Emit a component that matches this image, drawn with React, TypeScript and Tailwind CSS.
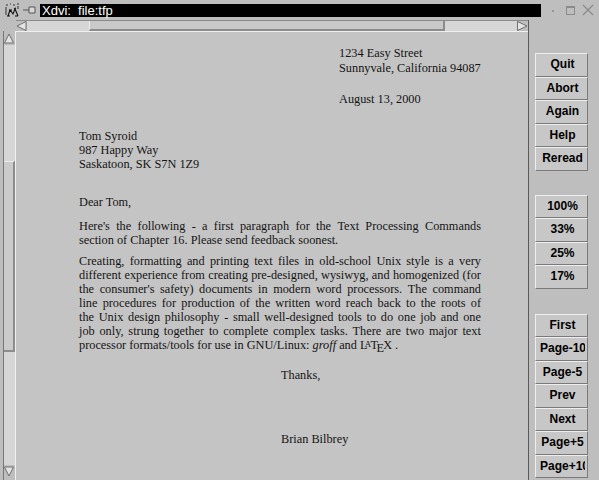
import React from "react";

const serif = "font-['Liberation_Serif','Times_New_Roman',serif]";
const sans = "font-['Liberation_Sans',Arial,sans-serif]";

function Justified({ text }: { text: string }) {
  return (
    <div className="flex justify-between">
      {text.split(" ").map((w, i) => (
        <span key={i}>{w}</span>
      ))}
    </div>
  );
}

function LaTeX() {
  return (
    <span className="whitespace-nowrap">
      L
      <span className="relative -top-[0.25em] -ml-[0.3em] -mr-[0.08em] text-[0.72em]">A</span>
      T
      <span className="relative top-[0.22em] -ml-[0.12em] -mr-[0.08em]">E</span>X
    </span>
  );
}

function Btn({ label }: { label: string }) {
  return (
    <div
      className={`h-[23.5px] w-[53px] border border-t-[#eeeeee] border-l-[#eeeeee] border-b-[#7a7a7a] border-r-[#7a7a7a] bg-[#c7c7c7] pl-[4px] pr-[2px] text-[12px] font-bold leading-[21px] text-black ${sans}`}
    >
      <div className="overflow-hidden whitespace-nowrap text-center">{label}</div>
    </div>
  );
}

function Arrow({ dir }: { dir: "up" | "down" | "left" | "right" }) {
  const pts = {
    up: "5,1 9.5,10 0.5,10",
    down: "0.5,1 9.5,1 5,10",
    left: "1,5 10,0.5 10,9.5",
    right: "0.5,0.5 10,5 0.5,9.5",
  }[dir];
  return (
    <svg width="11" height="11" viewBox="0 0 11 11">
      <polygon points={pts} fill="#e4e4e4" stroke="#6f6f6f" strokeWidth="1" />
    </svg>
  );
}

export default function App() {
  return (
    <div className="flex h-[480px] w-[599px] flex-col overflow-hidden bg-[#bebebe]">
      {/* title bar */}
      <div className="flex h-[20px] items-center">
        <div className="ml-[4px] flex w-[35px] items-center">
          <svg width="17" height="15" viewBox="0 0 17 15">
            <path d="M2 2h2M6 1h1M9 2h2M13 1h2M2 4v8M14 3v3" stroke="#333" strokeWidth="1" fill="none" />
            <path d="M4 13l2-6 3 4 2-5 3 7M5 7h3M10 6l2-1M3 13h3M11 13h3" stroke="#111" strokeWidth="1.1" fill="none" />
          </svg>
          <svg width="15" height="10" viewBox="0 0 15 10" className="ml-[1px]">
            <path d="M1 5h6M7 2v6M7 2h6v6h-6" stroke="#555" strokeWidth="1" fill="#d8d8d8" />
          </svg>
        </div>
        <div className={`ml-[1px] h-[13px] w-[501px] bg-black pl-[2px] text-[13px] leading-[13px] text-white ${sans}`}>
          Xdvi:&nbsp; file:tfp
        </div>
        <div className="ml-[8px] flex items-center gap-[6px]">
          <svg width="10" height="10" viewBox="0 0 10 10">
            <path d="M3 6h2" stroke="#8a8a8a" strokeWidth="1.5" />
          </svg>
          <svg width="11" height="11" viewBox="0 0 11 11">
            <rect x="1.5" y="1.5" width="8" height="8" stroke="#8a8a8a" fill="none" />
            <path d="M1.5 2.5h8" stroke="#8a8a8a" />
          </svg>
          <svg width="12" height="12" viewBox="0 0 12 12">
            <path d="M1 1l10 10M11 1L1 11" stroke="#8a8a8a" strokeWidth="1.2" />
          </svg>
        </div>
      </div>

      <div className="flex min-h-0 flex-1">
        {/* viewport */}
        <div className="flex w-[528px] flex-col">
          {/* horizontal scrollbar */}
          <div className="flex h-[11px]">
            <div className="w-[16px]" />
            <div className="flex flex-1 border-t border-[#8a8a8a]">
              <div className="flex w-[11px] items-center justify-center">
                <Arrow dir="left" />
              </div>
              <div className="w-[62px] bg-[#d6d6d6]" />
              <div className="w-[356px] border-b-2 border-r-2 border-l border-b-[#8c8c8c] border-r-[#8c8c8c] border-l-[#ececec] bg-[#c9c9c9]" />
              <div className="flex-1 bg-[#d6d6d6]" />
              <div className="flex w-[11px] items-center justify-center">
                <Arrow dir="right" />
              </div>
            </div>
          </div>

          <div className="flex min-h-0 flex-1">
            {/* vertical scrollbar */}
            <div className="w-[15px] pl-[3px]">
              <div className="flex h-full flex-col border-l border-[#777777] pb-[3px]">
                <div className="mt-[1px] flex h-[13px] items-center justify-center">
                  <Arrow dir="up" />
                </div>
                <div className="h-[116px] bg-[#d6d6d6]" />
                <div className="h-[191px] border-b-2 border-r-2 border-t border-b-[#8c8c8c] border-r-[#8c8c8c] border-t-[#ececec] bg-[#cbcbcb]" />
                <div className="flex-1 bg-[#d6d6d6]" />
                <div className="flex h-[12px] items-center justify-center">
                  <Arrow dir="down" />
                </div>
              </div>
            </div>

            {/* document */}
            <div
              className={`flex-1 border-l border-t border-[#f0f0f0] bg-[#c4c4c4] pl-[63px] pt-[14px] text-[12.3px] leading-[14px] text-[#141414] ${serif}`}
            >
              <div className="ml-[260px]">1234 Easy Street</div>
              <div className="ml-[260px] mt-[1px]">Sunnyvale, California 94087</div>
              <div className="ml-[260px] mt-[17px]">August 13, 2000</div>

              <div className="mt-[23px]">Tom Syroid</div>
              <div>987 Happy Way</div>
              <div>Saskatoon, SK S7N 1Z9</div>

              <div className="mt-[24px]">Dear Tom,</div>

              <div className="mt-[10px] w-[402px]">
                <Justified text="Here's the following - a first paragraph for the Text Processing Commands" />
                <div>section of Chapter 16. Please send feedback soonest.</div>
              </div>

              <div className="mt-[7px] w-[402px]">
                <Justified text="Creating, formatting and printing text files in old-school Unix style is a very" />
                <Justified text="different experience from creating pre-designed, wysiwyg, and homogenized (for" />
                <Justified text="the consumer's safety) documents in modern word processors. The command" />
                <Justified text="line procedures for production of the written word reach back to the roots of" />
                <Justified text="the Unix design philosophy - small well-designed tools to do one job and one" />
                <Justified text="job only, strung together to complete complex tasks. There are two major text" />
                <div>
                  processor formats/tools for use in GNU/Linux: <i>groff</i> and <LaTeX /> .
                </div>
              </div>

              <div className="ml-[202px] mt-[15px]">Thanks,</div>
              <div className="ml-[202px] mt-[50px]">Brian Bilbrey</div>
            </div>
          </div>
        </div>

        {/* separator */}
        <div className="w-[1px] bg-[#5a5a5a]" />

        {/* button panel */}
        <div className="flex flex-1 flex-col pl-[6px] pt-[33px]">
          <Btn label="Quit" />
          <Btn label="Abort" />
          <Btn label="Again" />
          <Btn label="Help" />
          <Btn label="Reread" />
          <div className="h-[24px]" />
          <Btn label="100%" />
          <Btn label="33%" />
          <Btn label="25%" />
          <Btn label="17%" />
          <div className="h-[25px]" />
          <Btn label="First" />
          <Btn label="Page-10" />
          <Btn label="Page-5" />
          <Btn label="Prev" />
          <Btn label="Next" />
          <Btn label="Page+5" />
          <Btn label="Page+10" />
        </div>
      </div>
    </div>
  );
}
